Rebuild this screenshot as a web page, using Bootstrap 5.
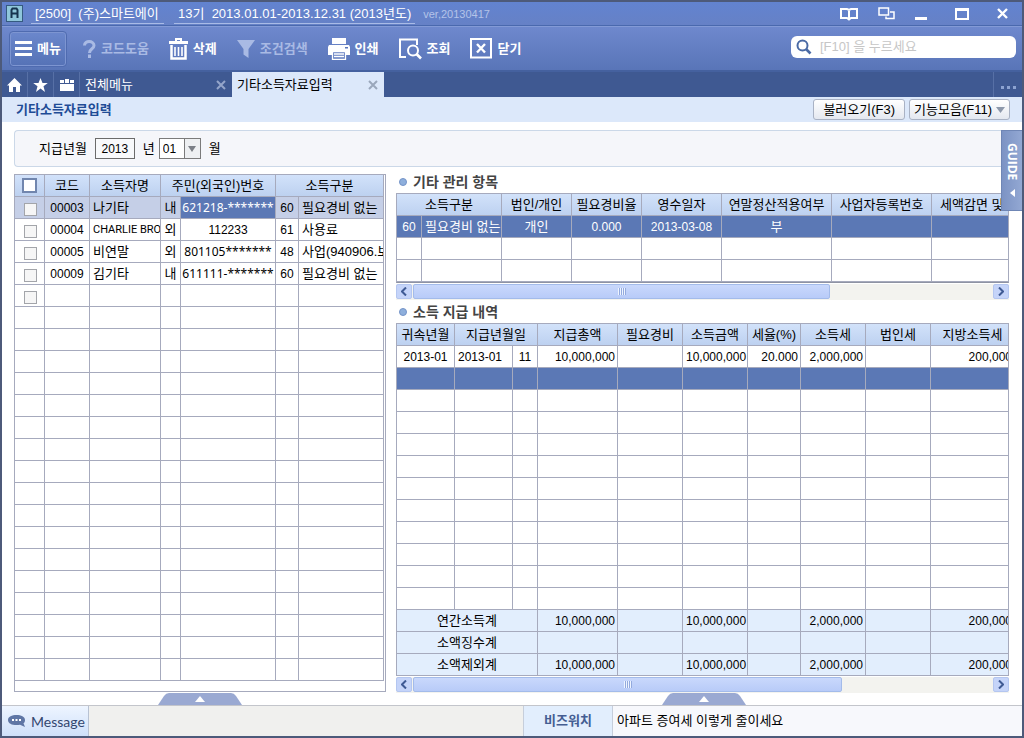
<!DOCTYPE html>
<html lang="ko">
<head>
<meta charset="utf-8">
<meta name="viewport" content="width=device-width, initial-scale=1">
<title>기타소득자료입력</title>
<link href="https://cdn.jsdelivr.net/npm/bootstrap@5.3.0/dist/css/bootstrap.min.css" rel="stylesheet">
<style>
  :root { --line: #a6aabd; --blue: #5b78b5; --soft: #e2eefd; }
  body { font: 13px/20px "Liberation Sans", "Noto Sans CJK KR", sans-serif; color: #000; background: #fff; }
  button, input, select { font: inherit; }
  button { border: 0; background: none; padding: 0; color: inherit; }
  svg { display: block; flex: none; }
  .app { min-height: 100vh; border: 2px solid #4d5a7a; }

  .titlebar { height: 24px; padding: 0 14px 0 4px; color: #fff; background: linear-gradient(#6283d0, #6681c6); border-bottom: 1px solid #4a69ae; }
  .titlebar .company, .titlebar .period { line-height: 19px; border-bottom: 1px solid #a9bbe6; }
  .titlebar .company { min-width: 133px; margin-left: 8px; }
  .titlebar .period { margin-left: 10px; }
  .version { font-size: 11px; color: #b4c3e8; }
  .window-tools { gap: 20px; }

  .toolbar { height: 46px; padding: 0 6px 0 7px; color: #fff; background: linear-gradient(#6e88cd, #5975b8); border-top: 1px solid #839ad6; border-bottom: 2px solid #45619f; }
  .toolbar button { font-weight: 700; gap: 5px; }
  .toolbar button:disabled { color: #a9bae4; }
  .tools { gap: 20px; margin-left: 16px; }
  .menu-btn { width: 58px; height: 36px; border: 1px solid #4f6bb0; border-radius: 4px; background: linear-gradient(#6b87cc, #5572b6); box-shadow: inset 0 0 0 1px #7d95d1; }
  .finder { width: 225px; height: 22px; padding-left: 5px; border-radius: 6px; background: #fff; }
  .finder input { width: 170px; height: 20px; border: 0; outline: 0; padding: 0; background: none; }
  .finder input::placeholder { color: #c6c6c6; opacity: 1; }

  .tabstrip { height: 25px; color: #fff; background: #3f5992; }
  .tabstrip .cell { width: 26px; border-right: 1px solid #5770a6; }
  .page-tab { width: 152px; padding: 0 6px 0 5px; }
  .page-tab.current { color: #000; background: #dce8fa; }
  .dots { color: #8da3d1; width: 29px; border-left: 1px solid #5770a6; gap: 3px; padding-top: 6px; }
  .dots i { width: 3px; height: 3px; background: currentColor; }

  .subbar { height: 25px; padding: 0 12px 0 14px; background: #dce8fa; }
  .subbar h1 { font-size: 13px; line-height: 24px; font-weight: 700; color: #1f4c96; margin: 0; }
  .soft-btn { height: 21px; padding: 0 9px; border: 1px solid #a9b2c4; border-radius: 3px; line-height: 19px; background: linear-gradient(#fff, #e4e8f0); }

  .work { padding: 8px 0 0 12px; }
  .filter { height: 37px; padding-left: 24px; margin-right: 20px; border: 1px solid #cbd8e8; border-right: 0; border-radius: 4px 0 0 4px; background: #f5f6fa; }
  .filter input { width: 40px; height: 21px; padding: 0; border: 1px solid #6b6b6b; text-align: center; font-size: 12px; background: #f8f9fb; }
  .filter select { width: 42px; height: 21px; padding: 0 0 2px 3px; border: 1px solid #7b7b7b; border-radius: 0; appearance: none; font-size: 12px; background: linear-gradient(90deg, #fff 24px, #7b7b7b 24px, #7b7b7b 25px, #eef0f2 25px); }
  .filter .arrow { position: absolute; right: 5px; top: 8px; pointer-events: none; }
  .guide { position: absolute; right: 0; top: 8px; width: 21px; height: 81px; border: 1px solid #6f86b5; border-right: 0; background: linear-gradient(90deg, #7c93c4, #93a8d3); color: #fff; font: 700 12px/19px "Open Sans", sans-serif; gap: 9px; padding-top: 12px; }
  .guide span { writing-mode: vertical-rl; }

  .panes { margin: 7px 13px 0 0; gap: 10px; }
  .people { width: 372px; border: 1px solid var(--line); margin-bottom: 13px; }
  .people table { width: 369px; }
  .sheet { overflow: hidden; border: 1px solid var(--line); border-bottom: 0; }
  .grid-table { table-layout: fixed; border-collapse: separate; border-spacing: 0; }
  .grid-table th, .grid-table td { height: 22px; padding: 0 4px; line-height: 20px; overflow: hidden; white-space: nowrap; border: 0 solid var(--line); border-width: 0 1px 1px 0; }
  .grid-table td { padding: 0 2px 0 3px; }
  .grid-table th { padding: 0; text-align: center; font-weight: 400; background: linear-gradient(#d2e2fa, #bdd1f0); }
  .grid-table .num { text-align: right; font-size: 12px; }
  .grid-table .mid { text-align: center; padding: 0; }
  .grid-table .dig { font-size: 12px; }
  .grid-table .latin { font: 11px/20px Roboto, sans-serif; padding-right: 0; }
  .grid-table .ssn { font: 12px/20px "Noto Sans", sans-serif; text-align: center; padding: 0; }
  .picked td { background: #c5cfe7; }
  .picked td.focus-cell, .active-row td { background: var(--blue); color: #fff; }
  tfoot td { background: var(--soft); }
  .people input { appearance: none; display: block; width: 13px; height: 13px; margin: 3px auto 0; border: 1px solid #a3a5aa; background: #f6f6f6; }
  .people th input { width: 15px; height: 15px; margin: 0 auto; border: 2px solid #7186ae; background: #fff; }
  .lines-bottom { border-bottom: 1px solid #8e93a3; }

  .group-title { height: 19px; font-size: 14px; line-height: 18px; font-weight: 700; color: #444; margin: 0; padding: 0 0 3px 3px; gap: 6px; }
  .group-title::before { content: ""; width: 8px; height: 8px; border-radius: 50%; background: #8eafdc; border: 1px solid #7594c8; }
  .hscroll { height: 16px; margin-top: 1px; background: #f3f3ef; }
  .hscroll button { width: 16px; height: 15px; border-radius: 2px; border: 1px solid #b4c6f0; background: #c5d4f9; }
  .thumb { height: 15px; margin-left: 1px; border: 1px solid #a3bbea; border-radius: 2px; background: linear-gradient(#c9d8fc, #b8cbf8); }
  .thumb i { width: 1px; height: 7px; background: #eef4ff; box-shadow: 1px 0 #93aade; }
  .handle { position: absolute; bottom: 0; width: 84px; height: 12px; }

  .statusbar { height: 31px; border-top: 1px solid #c3c5cb; background: #f0f0ee; }
  .statusbar .message { width: 87px; padding-left: 6px; gap: 6px; font: 14px/29px Lato, sans-serif; color: #33466f; background: linear-gradient(#eef5ff, #cfe0fa); border-right: 1px solid #b8c2d3; }
  .statusbar .watch { width: 90px; font-weight: 700; color: #445d92; background: var(--soft); border: 1px solid #c6cedb; border-width: 0 1px; }
  .statusbar .news { width: 409px; padding-left: 4px; background: #f7f8fc; color: #000; }
</style>
</head>
<body>
<div class="app d-flex flex-column">
  <header class="titlebar d-flex align-items-center">
    <svg width="17" height="17" viewBox="0 0 17 17"><rect x=".5" y=".5" width="16" height="16" fill="#8fc6da" stroke="#355a80"/><path d="M5.500 13V5l1-1.500h4l1 1.500v8M5.500 8.500h6" fill="none" stroke="#17344f" stroke-width="2"/></svg>
    <span class="company px-1">[2500]&nbsp; (주)스마트에이</span>
    <span class="period px-1">13기&nbsp; 2013.01.01-2013.12.31 (2013년도)</span>
    <span class="version ms-2">ver,20130417</span>
    <div class="window-tools d-flex align-items-center ms-auto">
      <button aria-label="도움말"><svg width="18" height="14" viewBox="0 0 18 14" fill="none" stroke="#fff" stroke-width="2"><path d="M1 2h6l2 1 2-1h6v9h-6l-2 1.500L7 11H1zM9 3v9"/></svg></button>
      <button aria-label="창 전환"><svg width="17" height="13" viewBox="0 0 17 13" fill="none" stroke="#fff" stroke-width="1.500"><path d="M1 1h9.500v7H1zM12 5h4v6.500H8V9.500"/></svg></button>
      <button aria-label="최소화"><svg width="12" height="14" viewBox="0 0 12 14"><path d="M0 10h12v3H0z" fill="#fff"/></svg></button>
      <button class="ms-2" aria-label="최대화"><svg width="14" height="12" viewBox="0 0 14 12"><path d="M1 1.500h12V11H1z" fill="none" stroke="#fff" stroke-width="2"/><path d="M0 0h14v3H0z" fill="#fff"/></svg></button>
      <button class="ms-2" aria-label="닫기"><svg width="11" height="11" viewBox="0 0 11 11"><path d="M1 1l9 9M10 1l-9 9" stroke="#fff" stroke-width="2.400"/></svg></button>
    </div>
  </header>

  <div class="toolbar d-flex align-items-center">
    <button class="menu-btn d-flex align-items-center justify-content-center"><svg width="17" height="15" viewBox="0 0 17 15"><path d="M0 0h17v3H0zM0 6h17v3H0zM0 12h17v3H0z" fill="#fff"/></svg>메뉴</button>
    <div class="tools d-flex">
      <button class="d-flex align-items-center" disabled><svg width="13" height="18" viewBox="0 0 13 18"><path d="M1.500 5.500C1.500 0 11 .5 11 5.500c0 3.500-4.500 3-4.500 7.500" fill="none" stroke="#a9bae4" stroke-width="3"/><path d="M5 14.500h3V18H5z" fill="#a9bae4"/></svg>코드도움</button>
      <button class="d-flex align-items-center"><svg width="19" height="22" viewBox="0 0 19 22"><path d="M0 3h6V0h7v3h6v3H0zM8 2v1h3V2z" fill="#fff" fill-rule="evenodd"/><path d="M2.500 7v13.500h14V7" fill="none" stroke="#fff" stroke-width="2.500"/><path d="M6 9v9M9.500 9v9M13 9v9" stroke="#fff" stroke-width="1.600"/></svg>삭제</button>
      <button class="d-flex align-items-center" disabled><svg width="18" height="18" viewBox="0 0 18 18"><path d="M0 0h18l-6.500 9v9l-5-3.500V9z" fill="#a9bae4"/></svg>조건검색</button>
      <button class="d-flex align-items-center"><svg width="22" height="22" viewBox="0 0 22 22"><path d="M4 0h14v6H4zM1 7h20l1 2v8h-4v-4H4v4H0V9z" fill="#fff"/><path d="M4.500 13.500h13v8h-13zM6 16h10M6 18.500h10" fill="none" stroke="#fff" stroke-width="1.300"/><path d="M17 9h3v1.500h-3z" fill="#5975b8"/></svg>인쇄</button>
      <button class="d-flex align-items-center"><svg width="23" height="22" viewBox="0 0 23 22"><path d="M7 19H1V1.500h17V7" fill="none" stroke="#fff" stroke-width="2"/><circle cx="14" cy="12.500" r="5" fill="none" stroke="#fff" stroke-width="2"/><path d="M17.500 16l4.500 4.500" stroke="#fff" stroke-width="2.600"/></svg>조회</button>
      <button class="d-flex align-items-center"><svg width="22" height="21" viewBox="0 0 22 21" fill="none" stroke="#fff"><path d="M1 1h20v18.500H1z" stroke-width="2"/><path d="M7 6l8 8.500M15 6l-8 8.500" stroke-width="2.400"/></svg>닫기</button>
    </div>
    <label class="finder d-flex align-items-center ms-auto mb-1">
      <svg width="16" height="16" viewBox="0 0 16 16" fill="none" stroke="#4a6aa5" stroke-width="2"><circle cx="6.500" cy="6.500" r="5"/><path d="M10 10l4.500 4.500" stroke-width="2.600"/></svg>
      <input class="ms-2" type="text" placeholder="[F10] 을 누르세요" aria-label="검색">
    </label>
  </div>

  <nav class="tabstrip d-flex align-items-stretch">
    <button class="cell d-flex align-items-center justify-content-center" aria-label="홈"><svg width="15" height="14" viewBox="0 0 15 14"><path d="M7.500 0L15 7.500h-2V14H9V9H6v5H2V7.500H0z" fill="#fff"/></svg></button>
    <button class="cell d-flex align-items-center justify-content-center" aria-label="즐겨찾기"><svg width="15" height="14" viewBox="0 0 15 14"><path d="M7.500 0l2 5h5.300l-4.300 3.300L12 14l-4.500-3.400L3 14l1.500-5.700L.2 5h5.300z" fill="#fff"/></svg></button>
    <button class="cell d-flex align-items-center justify-content-center" aria-label="모음"><svg width="14" height="12" viewBox="0 0 14 12"><path d="M0 1h4v3H0zM5 0h4v4H5zM10 1h4v3h-4zM0 5h14v7H0z" fill="#fff"/></svg></button>
    <div class="page-tab d-flex align-items-center justify-content-between"><span>전체메뉴</span><button aria-label="탭 닫기"><svg width="10" height="10" viewBox="0 0 10 10"><path d="M1 1l8 8M9 1L1 9" stroke="#94a5ca" stroke-width="2"/></svg></button></div>
    <div class="page-tab current d-flex align-items-center justify-content-between"><span>기타소득자료입력</span><button aria-label="탭 닫기"><svg width="10" height="10" viewBox="0 0 10 10"><path d="M1 1l8 8M9 1L1 9" stroke="#9aa7bb" stroke-width="2"/></svg></button></div>
    <button class="dots d-flex align-items-center justify-content-center ms-auto" aria-label="더 보기"><i></i><i></i><i></i></button>
  </nav>

  <div class="subbar d-flex align-items-center">
    <h1 class="me-auto">기타소득자료입력</h1>
    <button class="soft-btn">불러오기(F3)</button>
    <button class="soft-btn d-flex align-items-center ms-1 ps-1 pe-1">기능모음(F11)<svg class="ms-1" width="9" height="6" viewBox="0 0 9 6"><path d="M0 0h9L4.500 6z" fill="#8d98ab"/></svg></button>
  </div>

  <main class="work position-relative d-flex flex-column flex-grow-1">
    <form class="filter d-flex align-items-center">
      <label for="year">지급년월</label>
      <input id="year" class="mx-2" type="text" value="2013">
      <label for="month">년</label>
      <span class="position-relative ms-1">
        <select id="month"><option>01</option></select>
        <svg class="arrow" width="8" height="6" viewBox="0 0 8 6"><path d="M0 0h8L4 6z" fill="#7b7f86"/></svg>
      </span>
      <span class="ms-1 ps-1">월</span>
    </form>
    <button class="guide d-flex flex-column align-items-center"><span>GUIDE</span><svg width="5" height="8" viewBox="0 0 5 8"><path d="M5 0v8L0 4z" fill="#fff"/></svg></button>

    <div class="panes d-flex flex-grow-1">
      <section class="people flex-shrink-0">
        <table class="grid-table" data-rows="17" data-cols="7">
          <colgroup><col style="width:30px"><col style="width:45px"><col style="width:71px"><col style="width:20px"><col style="width:95px"><col style="width:23px"><col style="width:85px"></colgroup>
          <thead><tr><th><input type="checkbox" aria-label="전체 선택"></th><th>코드</th><th>소득자명</th><th colspan="2">주민(외국인)번호</th><th colspan="2">소득구분</th></tr></thead>
          <tbody>
            <tr class="picked"><td><input type="checkbox" aria-label="00003"></td><td class="mid dig">00003</td><td>나기타</td><td class="mid">내</td><td class="ssn focus-cell">621218-*******</td><td class="mid dig">60</td><td>필요경비 없는</td></tr>
            <tr><td><input type="checkbox" aria-label="00004"></td><td class="mid dig">00004</td><td class="latin">CHARLIE BRO</td><td class="mid">외</td><td class="mid dig">112233</td><td class="mid dig">61</td><td>사용료</td></tr>
            <tr><td><input type="checkbox" aria-label="00005"></td><td class="mid dig">00005</td><td>비연말</td><td class="mid">외</td><td class="ssn">801105*******</td><td class="mid dig">48</td><td>사업(940906.보</td></tr>
            <tr><td><input type="checkbox" aria-label="00009"></td><td class="mid dig">00009</td><td>김기타</td><td class="mid">내</td><td class="ssn">611111-*******</td><td class="mid dig">60</td><td>필요경비 없는</td></tr>
            <tr><td><input type="checkbox" aria-label="새 행"></td><td></td><td></td><td></td><td></td><td></td><td></td></tr>
          </tbody>
        </table>
      </section>

      <div class="flex-grow-1" style="min-width:0">
        <h2 class="group-title d-flex align-items-center">기타 관리 항목</h2>
        <div class="sheet lines-bottom">
          <table class="grid-table" style="width:655px" data-rows="2" data-cols="8">
            <colgroup><col style="width:25px"><col style="width:80px"><col style="width:70px"><col style="width:70px"><col style="width:80px"><col style="width:110px"><col style="width:100px"><col style="width:120px"></colgroup>
            <thead><tr><th colspan="2">소득구분</th><th>법인/개인</th><th>필요경비율</th><th>영수일자</th><th>연말정산적용여부</th><th>사업자등록번호</th><th class="text-start ps-2">세액감면 및</th></tr></thead>
            <tbody><tr class="active-row"><td class="mid dig">60</td><td>필요경비 없는</td><td class="mid">개인</td><td class="mid dig">0.000</td><td class="mid dig">2013-03-08</td><td class="mid">부</td><td></td><td></td></tr></tbody>
          </table>
        </div>
        <div class="hscroll d-flex">
          <button class="d-flex align-items-center justify-content-center" aria-label="왼쪽"><svg width="6" height="9" viewBox="0 0 6 9"><path d="M5 .5l-4 4 4 4" fill="none" stroke="#3f5a94" stroke-width="2"/></svg></button>
          <div class="thumb d-flex align-items-center justify-content-center" style="width:68%"><span class="d-flex" style="gap:1px"><i></i><i></i><i></i><i></i></span></div>
          <button class="d-flex align-items-center justify-content-center ms-auto" aria-label="오른쪽"><svg width="6" height="9" viewBox="0 0 6 9"><path d="M1 .5l4 4-4 4" fill="none" stroke="#3f5a94" stroke-width="2"/></svg></button>
        </div>

        <h2 class="group-title d-flex align-items-center mt-1">소득 지급 내역</h2>
        <div class="sheet">
          <table class="grid-table" style="width:618px" data-rows="10" data-cols="10">
            <colgroup><col style="width:58px"><col style="width:58px"><col style="width:25px"><col style="width:80px"><col style="width:65px"><col style="width:65px"><col style="width:53px"><col style="width:65px"><col style="width:65px"><col style="width:84px"></colgroup>
            <thead><tr><th>귀속년월</th><th colspan="2">지급년월일</th><th>지급총액</th><th>필요경비</th><th>소득금액</th><th>세율(%)</th><th>소득세</th><th>법인세</th><th>지방소득세</th></tr></thead>
            <tbody>
              <tr><td class="mid dig">2013-01</td><td class="dig">2013-01</td><td class="mid dig">11</td><td class="num">10,000,000</td><td></td><td class="num">10,000,000</td><td class="num">20.000</td><td class="num">2,000,000</td><td></td><td class="num">200,000</td></tr>
              <tr class="active-row"><td></td><td></td><td></td><td></td><td></td><td></td><td></td><td></td><td></td><td></td></tr>
            </tbody>
            <tfoot>
              <tr><td class="mid" colspan="3">연간소득계</td><td class="num">10,000,000</td><td></td><td class="num">10,000,000</td><td></td><td class="num">2,000,000</td><td></td><td class="num">200,000</td></tr>
              <tr><td class="mid" colspan="3">소액징수계</td><td></td><td></td><td></td><td></td><td></td><td></td><td></td></tr>
              <tr><td class="mid" colspan="3">소액제외계</td><td class="num">10,000,000</td><td></td><td class="num">10,000,000</td><td></td><td class="num">2,000,000</td><td></td><td class="num">200,000</td></tr>
            </tfoot>
          </table>
        </div>
        <div class="hscroll d-flex">
          <button class="d-flex align-items-center justify-content-center" aria-label="왼쪽"><svg width="6" height="9" viewBox="0 0 6 9"><path d="M5 .5l-4 4 4 4" fill="none" stroke="#3f5a94" stroke-width="2"/></svg></button>
          <div class="thumb d-flex align-items-center justify-content-center" style="width:70%"><span class="d-flex" style="gap:1px"><i></i><i></i><i></i><i></i></span></div>
          <button class="d-flex align-items-center justify-content-center ms-auto" aria-label="오른쪽"><svg width="6" height="9" viewBox="0 0 6 9"><path d="M1 .5l4 4-4 4" fill="none" stroke="#3f5a94" stroke-width="2"/></svg></button>
        </div>
      </div>
    </div>
    <button class="handle" style="left:156px" aria-label="왼쪽 패널 열기"><svg width="84" height="12" viewBox="0 0 84 12"><path d="M0 12L6 3q2-3 5-3h62q3 0 5 3l6 9z" fill="#9aa9d2"/><path d="M37 9l5-6 5 6z" fill="#fff"/></svg></button>
    <button class="handle" style="left:660px" aria-label="오른쪽 패널 열기"><svg width="84" height="12" viewBox="0 0 84 12"><path d="M0 12L6 3q2-3 5-3h62q3 0 5 3l6 9z" fill="#9aa9d2"/><path d="M37 9l5-6 5 6z" fill="#fff"/></svg></button>
  </main>

  <footer class="statusbar d-flex align-items-stretch">
    <button class="message d-flex align-items-center"><svg width="17" height="14" viewBox="0 0 17 14"><path d="M8.500 1C13 1 17 2.500 17 6c0 1.500-.5 2.500-1.500 3.300L17 13l-5-2.200c-6 1-12-.5-12-4.800C0 2.500 4 1 8.500 1z" fill="#5f76a5"/><path d="M4 5h2v2H4zM7.500 5h2v2h-2zM11 5h2v2h-2z" fill="#fff"/></svg>Message</button>
    <div class="watch d-flex align-items-center justify-content-center ms-auto">비즈워치</div>
    <a class="news d-flex align-items-center text-decoration-none" href="#">아파트 증여세 이렇게 줄이세요</a>
  </footer>
</div>
<script src="https://cdn.jsdelivr.net/npm/bootstrap@5.3.0/dist/js/bootstrap.bundle.min.js"></script>
<script>
  // Pad each grid with its empty entry rows
  document.querySelectorAll('table[data-rows]').forEach(function (table) {
    for (let r = 0; r < +table.dataset.rows; r++) {
      const row = table.tBodies[0].insertRow();
      for (let c = 0; c < +table.dataset.cols; c++) row.insertCell();
    }
  });
</script>
</body>
</html>
